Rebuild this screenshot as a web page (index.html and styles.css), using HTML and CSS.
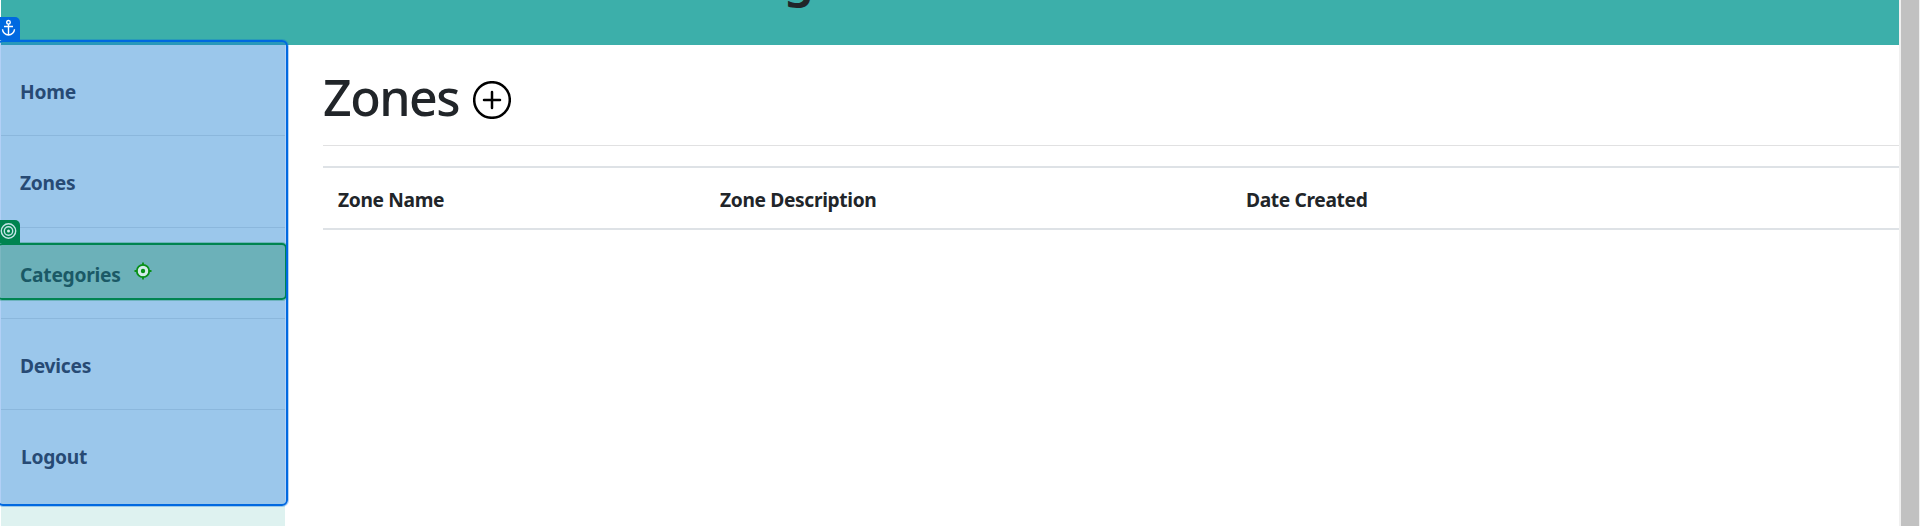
FILE: index.html
```html
<!DOCTYPE html>
<html lang="en">
<head>
<meta charset="utf-8">
<title>Zones</title>
<link rel="stylesheet" href="styles.css">
</head>
<body>
<div class="app">
  <div class="page">
    <header class="header"><span class="header-title">g</span></header>
    <div class="columns">
      <nav class="sidebar">
        <a class="nav-item home">Home</a>
        <a class="nav-item zones">Zones</a>
        <a class="nav-item categories">Categories</a>
        <a class="nav-item devices">Devices</a>
        <a class="nav-item logout">Logout</a>
      </nav>
      <main class="content">
        <div class="heading">
          <h1>Zones</h1>
          <svg class="add" viewBox="0 0 38 38"><circle cx="19" cy="19" r="17.8"/><path d="M19 11v16M11 19h16"/></svg>
        </div>
        <div class="table-head">
          <span class="name">Zone Name</span>
          <span class="description">Zone Description</span>
          <span class="created">Date Created</span>
        </div>
      </main>
    </div>
  </div>
  <div class="scrollbar"><div class="thumb"></div></div>
</div>
<div class="anchor-box"></div>
<div class="tab anchor-tab">
  <svg viewBox="0 0 20 22"><circle cx="8.5" cy="5.3" r="1.8"/><path d="M8.500 7v11M4 9.500h9M2.500 12.200c.2 3.300 2.800 5.800 6 5.800s5.800-2.500 6-5.800"/></svg>
</div>
<div class="target-box"></div>
<div class="tab target-tab">
  <svg viewBox="0 0 20 22"><circle cx="8.500" cy="11" r="7.200"/><circle cx="8.500" cy="11" r="4.200"/><circle class="dot" cx="8.500" cy="11" r="1.500"/></svg>
</div>
<svg class="crosshair" viewBox="0 0 18 18"><circle class="ring" cx="9" cy="9" r="6.200"/><path d="M9 .5v3M9 14.500v3M.5 9h3M14.500 9h3"/><circle class="center" cx="9" cy="9" r="2.200"/></svg>
</body>
</html>
```
FILE: styles.css
```css
* { box-sizing: border-box; }
body { margin: 0; background: #fff; color: #212529; font-family: "Noto Sans", "Open Sans", sans-serif; overflow: hidden; }
.app { display: flex; height: 526px; }
.page { flex: 1; margin-left: 1px; display: flex; flex-direction: column; }
.header { height: 45px; flex: none; background: #3cafaa; overflow: hidden; padding-left: 783px; }
.header-title { display: block; font-size: 48px; font-weight: 600; line-height: 48px; margin-top: -46px; }
.columns { flex: 1; display: flex; }
.sidebar { width: 284px; background: #def2f0; display: flex; flex-direction: column; }
.nav-item { height: 91.3px; flex: none; padding-left: 19px; border-bottom: 1px solid #c7dcda; color: #384045; font-size: 19.2px; font-weight: 700; letter-spacing: -.25px; line-height: 93px; }
.logout { border-bottom: 0; padding-left: 20px; }
.content { flex: 1; padding-left: 38px; }
.heading { height: 101px; border-bottom: 1px solid #e1e1e2; display: flex; }
h1 { width: 150px; margin: 0; font-size: 50px; font-weight: 500; line-height: 104px; letter-spacing: -1.5px; }
.add { width: 38px; height: 38px; margin-top: 36px; fill: none; stroke: #000; stroke-width: 2.5; stroke-linecap: round; }
.table-head { height: 64px; margin-top: 20px; border-top: 2px solid #dee2e6; border-bottom: 2px solid #dee2e6; display: grid; grid-template-columns: 382px 526px 1fr; padding-left: 15px; font-size: 19.2px; font-weight: 700; letter-spacing: -.35px; line-height: 63px; }
.scrollbar { width: 21px; background: #f0f0f0; padding: 0 1px 0 2px; }
.thumb { height: 100%; background: #c1c1c1; }
.anchor-box { position: absolute; left: -3px; top: 40px; width: 291px; height: 466px; border: 2px solid #0069e0; border-radius: 6px; background: rgba(0, 100, 224, .3); box-shadow: 0 0 0 1px rgba(0, 105, 224, .3); }
.target-box { position: absolute; left: -3px; top: 243px; width: 290px; height: 57px; border: 2px solid #008450; border-radius: 5px; background: rgba(0, 126, 70, .3); box-shadow: 0 0 0 1px rgba(0, 132, 80, .3); clip-path: inset(-1px 1px -1px 0); }
.tab { position: absolute; left: 0; width: 20px; height: 22px; border-top-right-radius: 5px; }
.tab svg { display: block; width: 20px; height: 22px; fill: none; stroke: #fff; stroke-width: 1.4; }
.anchor-tab { top: 17px; height: 23px; background: #0069e0; }
.target-tab { top: 220px; height: 23px; background: #008450; }
.target-tab .dot { fill: #d5efe9; stroke: none; }
.target-tab svg { stroke: #c5e5e8; }
.crosshair { position: absolute; left: 133.5px; top: 262px; width: 18px; height: 18px; fill: none; stroke: #089018; stroke-width: 1.8; }
.crosshair .ring { fill: #d3ebea; }
.crosshair .center { fill: #089018; stroke: none; }
```
